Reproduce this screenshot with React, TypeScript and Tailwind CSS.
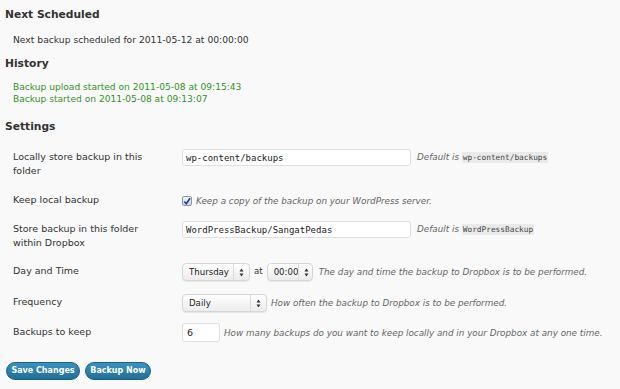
import React from "react";

const F = { fontFamily: '"DejaVu Sans", "Lucida Grande", sans-serif' };

function Arrows() {
  return (
    <svg width="5" height="9" viewBox="0 0 5 9" className="shrink-0">
      <path d="M2.5 0.5 L4.5 3.5 L0.5 3.5 Z" fill="#333" />
      <path d="M2.5 8.5 L4.5 5.5 L0.5 5.5 Z" fill="#333" />
    </svg>
  );
}

function Select({ value, w }: { value: string; w: string }) {
  return (
    <div
      className={`${w} h-[18px] flex items-center justify-between pl-[6px] pr-[5px] rounded-[4px] border border-[#d6d6d6] bg-gradient-to-b from-[#ffffff] to-[#ececec] shadow-[0_1px_1px_rgba(0,0,0,0.08)] text-[8.6px] text-[#222] whitespace-nowrap`}
    >
      <span>{value}</span>
      <div className="flex items-center h-full">
        <div className="w-px h-full bg-[#dcdcdc] mr-[5px]" />
        <Arrows />
      </div>
    </div>
  );
}

function Help({ children }: { children: React.ReactNode }) {
  return <span className="italic text-[#666] text-[8.8px] whitespace-nowrap">{children}</span>;
}

function Code({ children }: { children: string }) {
  return (
    <span
      className="bg-[#eaeaea] text-[#444] text-[7.8px] px-[1px] py-[1px] not-italic"
      style={{ fontFamily: '"DejaVu Sans Mono", monospace' }}
    >
      {children}
    </span>
  );
}

function TextInput({ value, w }: { value: string; w: string }) {
  return (
    <div
      className={`${w} h-[17px] flex items-center px-[3px] bg-white border border-[#dfdfdf] rounded-[3px] text-[9px] text-[#222]`}
      style={{ fontFamily: '"DejaVu Sans Mono", monospace' }}
    >
      {value}
    </div>
  );
}

export default function App() {
  return (
    <div className="w-[620px] h-[389px] bg-[#f9f9f9] text-[#333] overflow-hidden px-[5px]" style={F}>
      <h2 className="pt-[7px] text-[10.7px] font-bold leading-[16px] text-[#333]">Next Scheduled</h2>
      <p className="mt-[10px] pl-[8px] text-[9.2px] leading-[14px]">Next backup scheduled for 2011-05-12 at 00:00:00</p>
      <h2 className="mt-[9px] text-[10.7px] font-bold leading-[16px]">History</h2>
      <div className="mt-[9px] pl-[8px] text-[9.1px] leading-[12px] text-[#2f951c]">
        <div>Backup upload started on 2011-05-08 at 09:15:43</div>
        <div>Backup started on 2011-05-08 at 09:13:07</div>
      </div>
      <h2 className="mt-[14px] text-[10.7px] font-bold leading-[16px]">Settings</h2>

      <div className="mt-[14px] pl-[8px] text-[9.5px] leading-[14px]">
        <div className="flex h-[43px]">
          <div className="w-[169px] pt-[1px]">
            Locally store backup in this
            <br />
            folder
          </div>
          <div className="flex items-start gap-[6px]">
            <TextInput value="wp-content/backups" w="w-[229px]" />
            <div className="pt-[1px]">
              <Help>
                Default is <Code>wp-content/backups</Code>
              </Help>
            </div>
          </div>
        </div>

        <div className="flex h-[29px] items-start">
          <div className="w-[169px] pt-[1px]">Keep local backup</div>
          <div className="flex items-center gap-[4px] pt-[2px]">
            <div className="w-[10px] h-[10px] border border-[#8a97a8] rounded-[2px] bg-gradient-to-b from-[#f4f8fc] to-[#c9d7e8] flex items-center justify-center">
              <svg width="9" height="9" viewBox="0 0 9 9">
                <path d="M1.5 4.5 L3.7 7 L8 0.8" stroke="#1d3f8a" strokeWidth="1.8" fill="none" />
              </svg>
            </div>
            <Help>Keep a copy of the backup on your WordPress server.</Help>
          </div>
        </div>

        <div className="flex h-[42px]">
          <div className="w-[169px] pt-[1px]">
            Store backup in this folder
            <br />
            within Dropbox
          </div>
          <div className="flex items-start gap-[6px]">
            <TextInput value="WordPressBackup/SangatPedas" w="w-[229px]" />
            <div className="pt-[1px]">
              <Help>
                Default is <Code>WordPressBackup</Code>
              </Help>
            </div>
          </div>
        </div>

        <div className="flex h-[31px]">
          <div className="w-[169px] pt-[1px]">Day and Time</div>
          <div className="flex items-start gap-[4px]">
            <Select value="Thursday" w="w-[68px]" />
            <span className="text-[8.6px] leading-[14px] pt-[1px]">at</span>
            <Select value="00:00" w="w-[46px]" />
            <div className="pt-[2px] pl-[2px]">
              <Help>The day and time the backup to Dropbox is to be performed.</Help>
            </div>
          </div>
        </div>

        <div className="flex h-[29px]">
          <div className="w-[169px] pt-[1px]">Frequency</div>
          <div className="flex items-start gap-[4px]">
            <Select value="Daily" w="w-[85px]" />
            <div className="pt-[2px]">
              <Help>How often the backup to Dropbox is to be performed.</Help>
            </div>
          </div>
        </div>

        <div className="flex h-[39px]">
          <div className="w-[169px] pt-[2px]">Backups to keep</div>
          <div className="flex items-start gap-[4px]">
            <div className="w-[38px] h-[19px] flex items-center px-[4px] bg-white border border-[#dfdfdf] rounded-[3px] text-[9.5px] text-[#222]">
              6
            </div>
            <div className="pt-[3px]">
              <Help>How many backups do you want to keep locally and in your Dropbox at any one time.</Help>
            </div>
          </div>
        </div>
      </div>

      <div className="flex gap-[5px] pl-[1px]">
        <button className="h-[18px] w-[74px] rounded-full border border-[#1d5f84] bg-gradient-to-b from-[#3a93c2] to-[#1f6f98] text-white text-[8px] font-bold leading-none whitespace-nowrap">
          Save Changes
        </button>
        <button className="h-[18px] w-[66px] rounded-full border border-[#1d5f84] bg-gradient-to-b from-[#3a93c2] to-[#1f6f98] text-white text-[8px] font-bold leading-none whitespace-nowrap">
          Backup Now
        </button>
      </div>
    </div>
  );
}
